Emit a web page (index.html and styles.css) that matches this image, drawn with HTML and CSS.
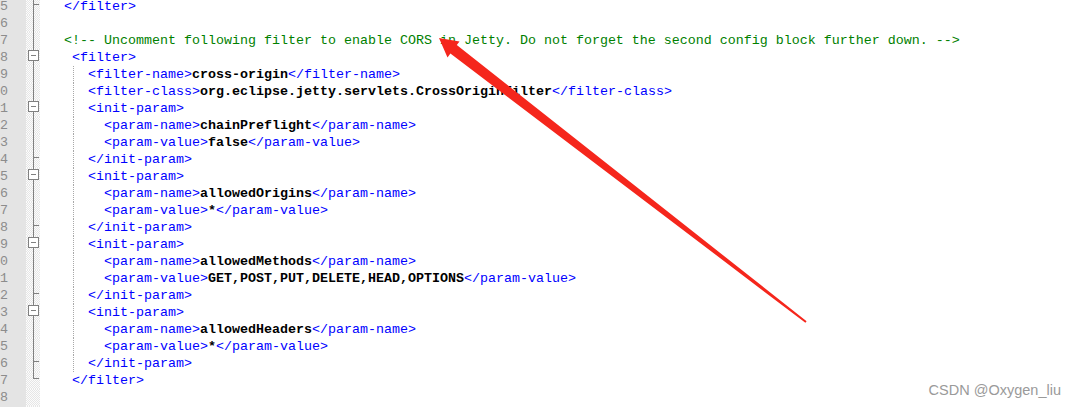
FILE: index.html
```html
<!DOCTYPE html>
<html lang="en">
<head>
  <meta charset="UTF-8">
  <title>web.xml - CORS filter</title>
  <link rel="stylesheet" href="styles.css">
</head>
<body>

  <div class="editor">
    <div class="row"><div class="ln">25</div><div class="fold f-end"></div><div class="code"><span class="tag">&lt;/filter&gt;</span></div></div>
    <div class="row"><div class="ln">26</div><div class="fold f-line"></div><div class="code"></div></div>
    <div class="row"><div class="ln">27</div><div class="fold f-line"></div><div class="code"><span class="cmt">&lt;!-- Uncomment following filter to enable CORS in Jetty. Do not forget the second config block further down. --&gt;</span></div></div>
    <div class="row"><div class="ln">28</div><div class="fold f-line"><span class="box"></span></div><div class="code"> <span class="tag">&lt;filter&gt;</span></div></div>
    <div class="row"><div class="ln">29</div><div class="fold f-line"></div><div class="code guide">   <span class="tag">&lt;filter-name&gt;</span><b>cross-origin</b><span class="tag">&lt;/filter-name&gt;</span></div></div>
    <div class="row"><div class="ln">30</div><div class="fold f-line"></div><div class="code guide">   <span class="tag">&lt;filter-class&gt;</span><b>org.eclipse.jetty.servlets.CrossOriginFilter</b><span class="tag">&lt;/filter-class&gt;</span></div></div>
    <div class="row"><div class="ln">31</div><div class="fold f-line"><span class="box"></span></div><div class="code guide">   <span class="tag">&lt;init-param&gt;</span></div></div>
    <div class="row"><div class="ln">32</div><div class="fold f-line"></div><div class="code guide">     <span class="tag">&lt;param-name&gt;</span><b>chainPreflight</b><span class="tag">&lt;/param-name&gt;</span></div></div>
    <div class="row"><div class="ln">33</div><div class="fold f-line"></div><div class="code guide">     <span class="tag">&lt;param-value&gt;</span><b>false</b><span class="tag">&lt;/param-value&gt;</span></div></div>
    <div class="row"><div class="ln">34</div><div class="fold f-end"></div><div class="code guide">   <span class="tag">&lt;/init-param&gt;</span></div></div>
    <div class="row"><div class="ln">35</div><div class="fold f-line"><span class="box"></span></div><div class="code guide">   <span class="tag">&lt;init-param&gt;</span></div></div>
    <div class="row"><div class="ln">36</div><div class="fold f-line"></div><div class="code guide">     <span class="tag">&lt;param-name&gt;</span><b>allowedOrigins</b><span class="tag">&lt;/param-name&gt;</span></div></div>
    <div class="row"><div class="ln">37</div><div class="fold f-line"></div><div class="code guide">     <span class="tag">&lt;param-value&gt;</span><b>*</b><span class="tag">&lt;/param-value&gt;</span></div></div>
    <div class="row"><div class="ln">38</div><div class="fold f-end"></div><div class="code guide">   <span class="tag">&lt;/init-param&gt;</span></div></div>
    <div class="row"><div class="ln">39</div><div class="fold f-line"><span class="box"></span></div><div class="code guide">   <span class="tag">&lt;init-param&gt;</span></div></div>
    <div class="row"><div class="ln">40</div><div class="fold f-line"></div><div class="code guide">     <span class="tag">&lt;param-name&gt;</span><b>allowedMethods</b><span class="tag">&lt;/param-name&gt;</span></div></div>
    <div class="row"><div class="ln">41</div><div class="fold f-line"></div><div class="code guide">     <span class="tag">&lt;param-value&gt;</span><b>GET,POST,PUT,DELETE,HEAD,OPTIONS</b><span class="tag">&lt;/param-value&gt;</span></div></div>
    <div class="row"><div class="ln">42</div><div class="fold f-end"></div><div class="code guide">   <span class="tag">&lt;/init-param&gt;</span></div></div>
    <div class="row"><div class="ln">43</div><div class="fold f-line"><span class="box"></span></div><div class="code guide">   <span class="tag">&lt;init-param&gt;</span></div></div>
    <div class="row"><div class="ln">44</div><div class="fold f-line"></div><div class="code guide">     <span class="tag">&lt;param-name&gt;</span><b>allowedHeaders</b><span class="tag">&lt;/param-name&gt;</span></div></div>
    <div class="row"><div class="ln">45</div><div class="fold f-line"></div><div class="code guide">     <span class="tag">&lt;param-value&gt;</span><b>*</b><span class="tag">&lt;/param-value&gt;</span></div></div>
    <div class="row"><div class="ln">46</div><div class="fold f-end"></div><div class="code guide">   <span class="tag">&lt;/init-param&gt;</span></div></div>
    <div class="row"><div class="ln">47</div><div class="fold f-last"></div><div class="code"> <span class="tag">&lt;/filter&gt;</span></div></div>
    <div class="row"><div class="ln">48</div><div class="fold"></div><div class="code"></div></div>
    <div class="row"><div class="ln">49</div><div class="fold"></div><div class="code"></div></div>
  </div>

  <!-- red annotation arrow drawn over the screenshot -->
  <svg class="arrow" width="1076" height="407" viewBox="0 0 1076 407">
    <polygon fill="#f5261c" points="439,38 459.5,41.5 456.8,45 806.6,321.2 805.4,322.8 450.4,53.5 447.5,57.5"/>
  </svg>

  <div class="watermark">CSDN @Oxygen_liu</div>

</body>
</html>
```

FILE: styles.css
```css
html, body {
  margin: 0;
  height: 100%;
  overflow: hidden;
  background-color: #fff;
}
body {
  position: relative;
}

.editor {
  margin-top: -2px;
  font-family: "Liberation Mono", "Courier New", monospace;
  font-size: 13.333px;
}
.row {
  display: flex;
  height: 17px;
  line-height: 17px;
}

/* line numbers, cut off at the left edge */
.ln {
  width: 8px;
  padding-right: 18px;
  flex: none;
  background-color: #e4e4e4;
  color: #8c8c8c;
  direction: rtl;
  overflow: hidden;
  white-space: nowrap;
}

/* fold margin */
.fold {
  width: 14px;
  flex: none;
  position: relative;
  background: repeating-conic-gradient(#e6e6e6 0 25%, #fcfcfc 0 50%) 0 0 / 2px 2px;
}
.f-line {
  background:
    linear-gradient(#808080, #808080) no-repeat 7px 0 / 1px 100%,
    repeating-conic-gradient(#e6e6e6 0 25%, #fcfcfc 0 50%) 0 0 / 2px 2px;
}
.f-end {
  background:
    linear-gradient(#808080, #808080) no-repeat 7px 0 / 1px 100%,
    linear-gradient(#808080, #808080) no-repeat 7px 6px / 6px 1px,
    repeating-conic-gradient(#e6e6e6 0 25%, #fcfcfc 0 50%) 0 0 / 2px 2px;
}
.f-last {
  background:
    linear-gradient(#808080, #808080) no-repeat 7px 0 / 1px 7px,
    linear-gradient(#808080, #808080) no-repeat 7px 6px / 6px 1px,
    repeating-conic-gradient(#e6e6e6 0 25%, #fcfcfc 0 50%) 0 0 / 2px 2px;
}
.box {
  position: absolute;
  left: 2px;
  top: 1px;
  width: 9px;
  height: 9px;
  border: 1px solid #808080;
  background: linear-gradient(#808080, #808080) no-repeat 2px 4px / 5px 1px, #fff;
}

/* code area */
.code {
  flex: 1;
  padding-left: 24px;
  white-space: pre;
  color: #000;
}
.guide {
  background: repeating-linear-gradient(to bottom, #a8a8a8 0 1px, transparent 1px 2px) no-repeat 33px 0 / 1px 100%;
}
.tag {
  color: #0000ff;
}
.cmt {
  color: #008000;
}
.code b {
  font-weight: bold;
}

.arrow {
  position: absolute;
  left: 0;
  top: 0;
  pointer-events: none;
}

.watermark {
  position: absolute;
  right: 15px;
  bottom: 9px;
  font-family: "Liberation Sans", Arial, sans-serif;
  font-size: 14.5px;
  color: #9a9a9a;
}
```
